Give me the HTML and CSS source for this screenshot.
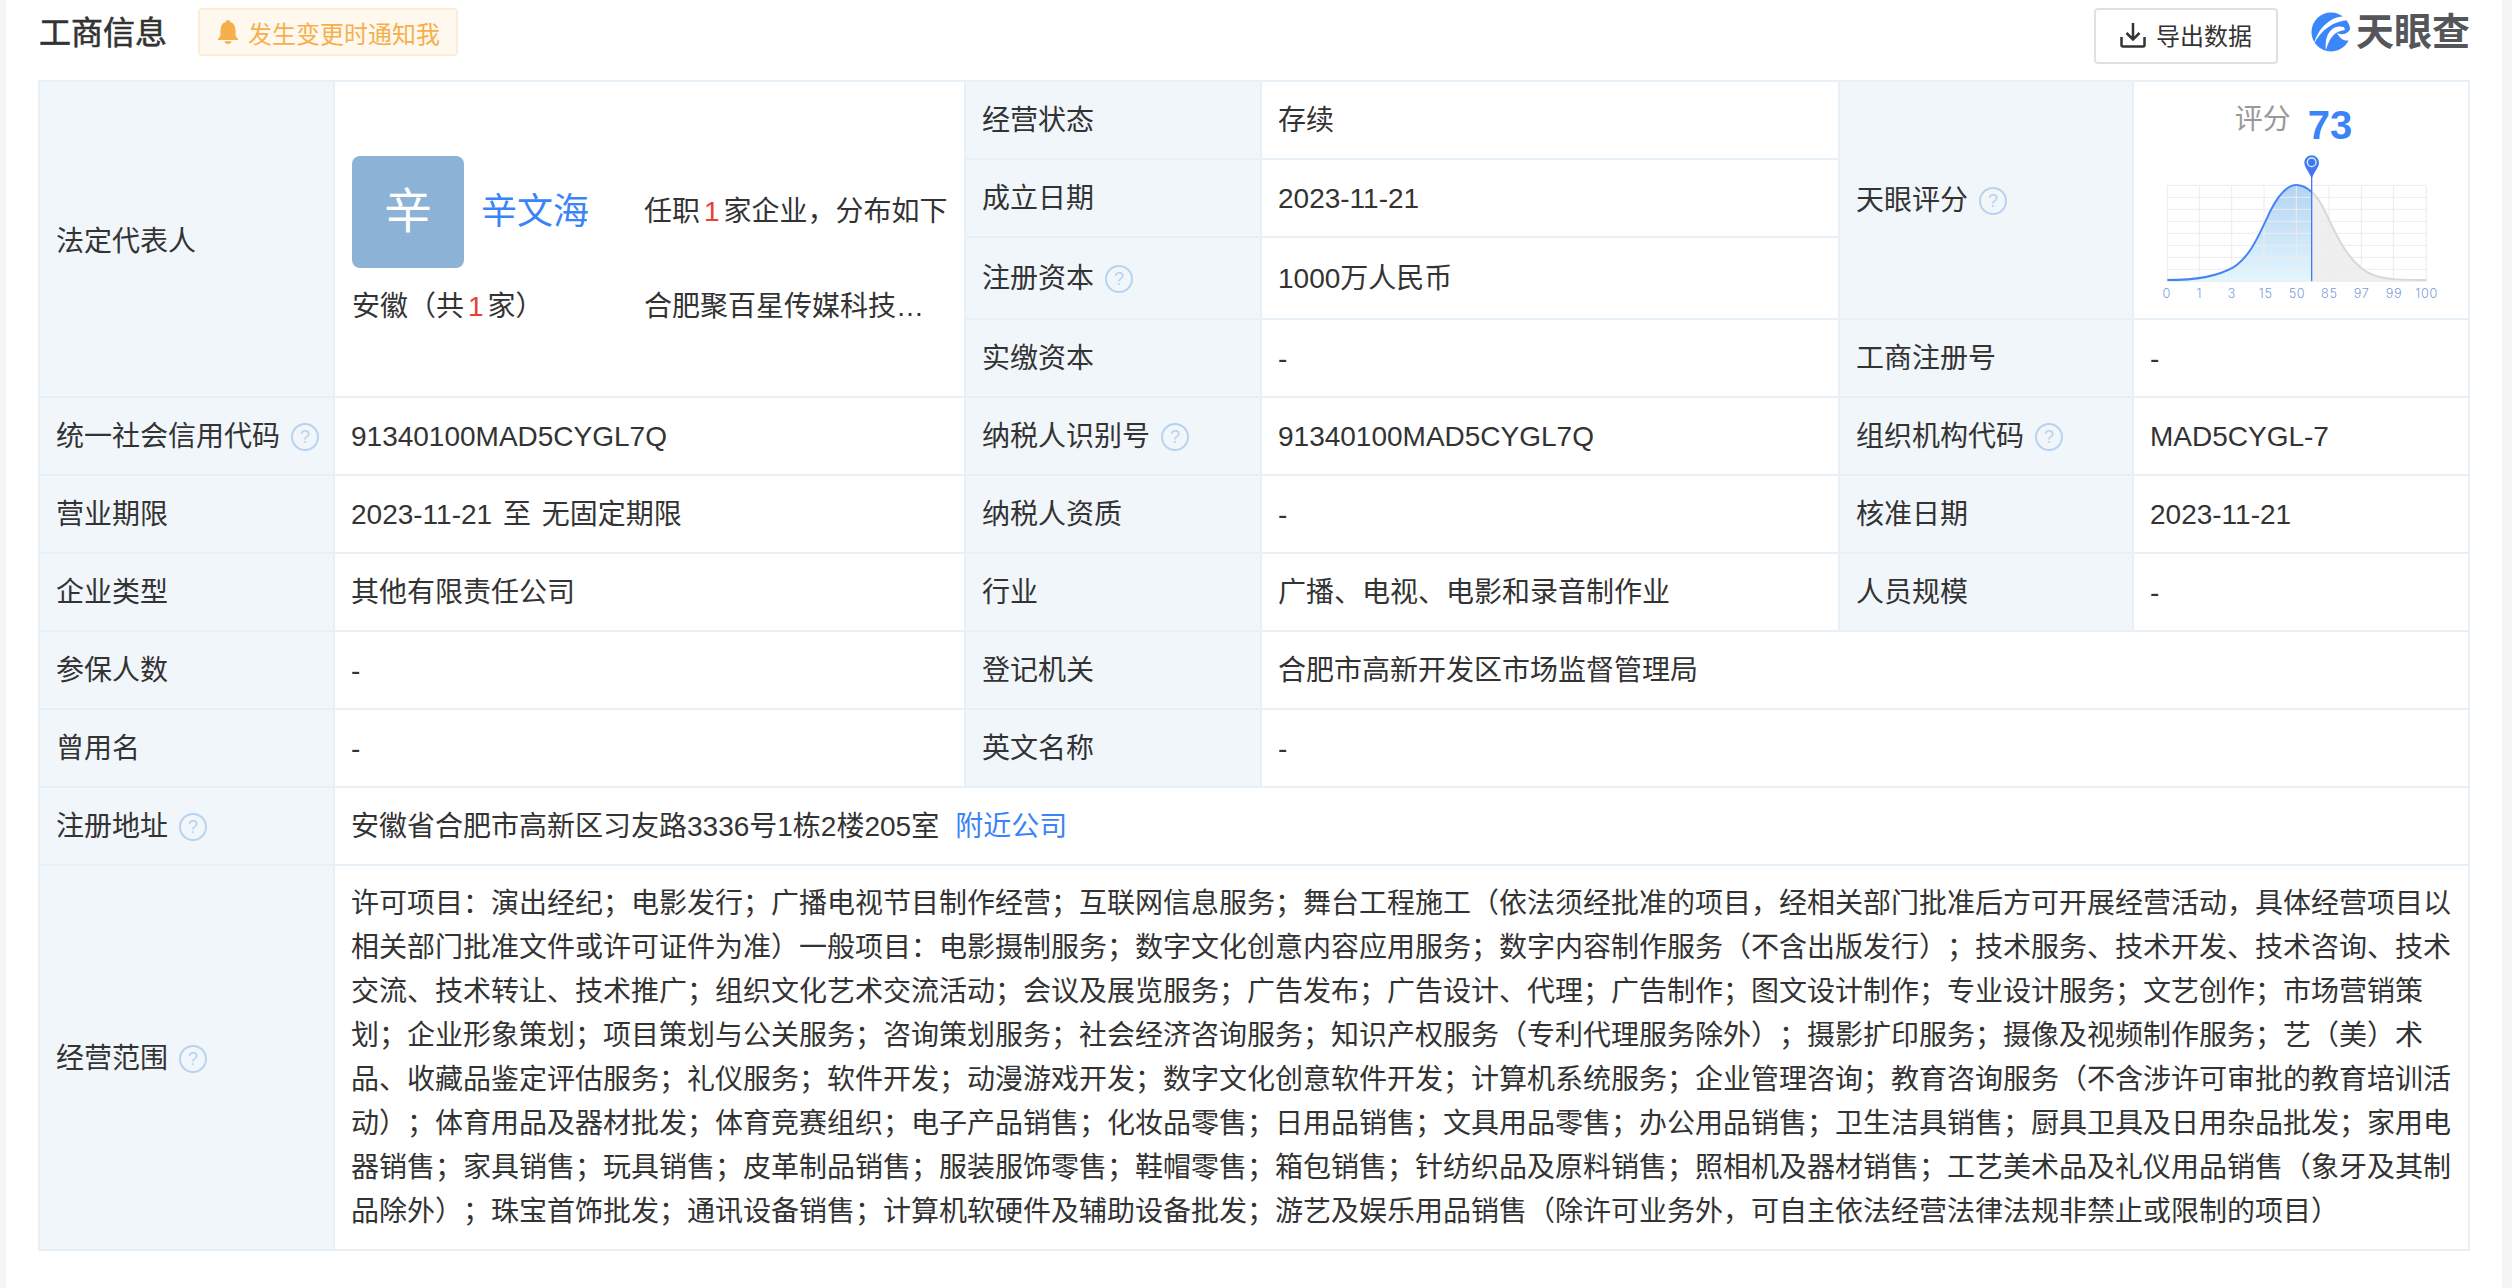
FILE: index.html
```html
<!DOCTYPE html>
<html lang="zh-CN">
<head>
<meta charset="utf-8">
<title>工商信息</title>
<link rel="stylesheet" href="styles.css">
</head>
<body>
<main class="card">
  <header class="head">
    <h2 class="title">工商信息</h2>
    <div class="notify">
      <svg class="bell" viewBox="0 0 20 24"><path d="M10 0c1.300 0 2.200.9 2.300 2C15.800 3 17.500 6 17.500 10v5.500L20 19v1H0v-1l2.500-3.500V10C2.500 6 4.200 3 7.700 2 7.800.9 8.700 0 10 0z"/><path d="M6.500 21.300h7C13.200 23 11.800 24 10 24s-3.200-1-3.500-2.700z"/></svg>
      <span>发生变更时通知我</span>
    </div>
    <div class="spacer"></div>
    <button class="export" type="button">
      <svg class="dl" viewBox="0 0 26 26"><path d="M13 1v16M6.500 11l6.500 6.500 6.500-6.500M1.500 15v8c0 1 .6 1.500 1.500 1.500h20c.9 0 1.500-.5 1.500-1.500v-8"/></svg>
      <span>导出数据</span>
    </button>
    <div class="logo">
      <svg class="logo-mark" viewBox="0 0 40 40">
        <circle cx="20" cy="20" r="19.500" fill="#3b86f8"/>
        <path d="M37 5C25 2 8 12 3 32 10 18 22 9 38 8Z" fill="#fff"/>
        <path d="M33 15C23 12 13 20 15 38 18 27 23 19 34 18Z" fill="#fff"/>
        <path d="M40 15C38 21 33 24 26 21 29 27 34 30 39 28L40 24Z" fill="#fff"/>
      </svg>
      <span class="logo-text">天眼查</span>
    </div>
  </header>

  <table class="info">
    <colgroup>
      <col class="c1"><col class="c2"><col class="c3"><col class="c4"><col class="c5"><col class="c6">
    </colgroup>
    <tbody>
      <tr>
        <th rowspan="4" class="legal-label">法定代表人</th>
        <td rowspan="4" class="legal">
          <div class="legal-grid">
            <div class="person">
              <div class="avatar">辛</div>
              <a class="name">辛文海</a>
            </div>
            <div class="dist">任职<i class="red">1</i>家企业，分布如下</div>
            <div>安徽（共<i class="red">1</i>家）</div>
            <div class="dist clip">合肥聚百星传媒科技…</div>
          </div>
        </td>
        <th>经营状态</th>
        <td>存续</td>
        <th rowspan="3">天眼评分<span class="help">?</span></th>
        <td rowspan="3" class="score">
          <div class="score-head"><span class="score-label">评分</span><span class="score-num">73</span></div>
          <svg class="chart" viewBox="12 210 1002 480">
            <defs>
              <linearGradient id="bluefill" x1="0" y1="0" x2="0" y2="1">
                <stop offset="0" stop-color="#b4d3f4"/>
                <stop offset="1" stop-color="#e3f6fd"/>
              </linearGradient>
              <linearGradient id="pinfill" x1="0" y1="0" x2="0" y2="1">
                <stop offset="0" stop-color="#3b82ee"/>
                <stop offset="1" stop-color="#4a6ff0"/>
              </linearGradient>
            </defs>
            <path class="gray-fill" d="M545 336C575 360 590 410 620 465C650 525 690 570 730 585C770 600 820 600 889 600V604H545Z"/>
            <path fill="url(#bluefill)" d="M112 600C200 600 260 590 310 562C360 530 385 470 420 395C445 345 470 315 499 315C515 315 530 322 545 336V604H112Z"/>
            <path class="grid" d="M112 316V604M208 316V604M305 316V604M402 316V604M499 316V604M597 316V604M694 316V604M790 316V604M889 316V604M112 316H889M112 352H889M112 388H889M112 424H889M112 460H889M112 496H889M112 532H889M112 568H889M112 604H889"/>
            <path class="gray-line" d="M545 336C575 360 590 410 620 465C650 525 690 570 730 585C770 600 820 600 889 600"/>
            <path class="blue-line" d="M112 600C200 600 260 590 310 562C360 530 385 470 420 395C445 345 470 315 499 315C515 315 530 322 545 336"/>
            <path class="pin-line" d="M545 280V604"/>
            <path fill="url(#pinfill)" d="M545 226c12 0 22 10 22 22 0 14-14 26-22 48-8-22-22-34-22-48 0-12 10-22 22-22z"/>
            <circle class="pin-dot" cx="545" cy="247" r="13"/>
            <g class="ticks">
              <text x="110" y="655">0</text><text x="208" y="655">1</text><text x="305" y="655">3</text><text x="407" y="655">15</text><text x="501" y="655">50</text><text x="598" y="655">85</text><text x="695" y="655">97</text><text x="792" y="655">99</text><text x="890" y="655">100</text>
            </g>
          </svg>
        </td>
      </tr>
      <tr><th>成立日期</th><td>2023-11-21</td></tr>
      <tr class="r-wide"><th>注册资本<span class="help">?</span></th><td>1000万人民币</td></tr>
      <tr><th>实缴资本</th><td>-</td><th>工商注册号</th><td>-</td></tr>
      <tr><th>统一社会信用代码<span class="help">?</span></th><td>91340100MAD5CYGL7Q</td><th>纳税人识别号<span class="help">?</span></th><td>91340100MAD5CYGL7Q</td><th>组织机构代码<span class="help">?</span></th><td>MAD5CYGL-7</td></tr>
      <tr><th>营业期限</th><td>2023-11-21 <span class="to">至</span> 无固定期限</td><th>纳税人资质</th><td>-</td><th>核准日期</th><td>2023-11-21</td></tr>
      <tr><th>企业类型</th><td>其他有限责任公司</td><th>行业</th><td>广播、电视、电影和录音制作业</td><th>人员规模</th><td>-</td></tr>
      <tr><th>参保人数</th><td>-</td><th>登记机关</th><td colspan="3">合肥市高新开发区市场监督管理局</td></tr>
      <tr><th>曾用名</th><td>-</td><th>英文名称</th><td colspan="3">-</td></tr>
      <tr><th>注册地址<span class="help">?</span></th><td colspan="5">安徽省合肥市高新区习友路3336号1栋2楼205室<a class="near">附近公司</a></td></tr>
      <tr class="r-scope"><th>经营范围<span class="help">?</span></th><td colspan="5" class="scope">许可项目：演出经纪；电影发行；广播电视节目制作经营；互联网信息服务；舞台工程施工（依法须经批准的项目，经相关部门批准后方可开展经营活动，具体经营项目以相关部门批准文件或许可证件为准）一般项目：电影摄制服务；数字文化创意内容应用服务；数字内容制作服务（不含出版发行）；技术服务、技术开发、技术咨询、技术交流、技术转让、技术推广；组织文化艺术交流活动；会议及展览服务；广告发布；广告设计、代理；广告制作；图文设计制作；专业设计服务；文艺创作；市场营销策划；企业形象策划；项目策划与公关服务；咨询策划服务；社会经济咨询服务；知识产权服务（专利代理服务除外）；摄影扩印服务；摄像及视频制作服务；艺（美）术品、收藏品鉴定评估服务；礼仪服务；软件开发；动漫游戏开发；数字文化创意软件开发；计算机系统服务；企业管理咨询；教育咨询服务（不含涉许可审批的教育培训活动）；体育用品及器材批发；体育竞赛组织；电子产品销售；化妆品零售；日用品销售；文具用品零售；办公用品销售；卫生洁具销售；厨具卫具及日用杂品批发；家用电器销售；家具销售；玩具销售；皮革制品销售；服装服饰零售；鞋帽零售；箱包销售；针纺织品及原料销售；照相机及器材销售；工艺美术品及礼仪用品销售（象牙及其制品除外）；珠宝首饰批发；通讯设备销售；计算机软硬件及辅助设备批发；游艺及娱乐用品销售（除许可业务外，可自主依法经营法律法规非禁止或限制的项目）</td></tr>
    </tbody>
  </table>
</main>
</body>
</html>
```

FILE: styles.css
```css
* { box-sizing: border-box; }
html, body { margin: 0; height: 100%; }
body {
  background: #f5f5f5;
  padding: 0 10px 0 6px;
  overflow: hidden;
  font-family: "Liberation Sans", "Noto Sans CJK SC", sans-serif;
  color: #333;
  font-size: 28px;
  text-spacing-trim: space-all;
}
.card {
  background: #fff;
  height: 1288px;
  padding: 0 32px;
}
.head {
  display: flex;
  align-items: flex-start;
  height: 80px;
  padding-top: 8px;
}
.title {
  margin: 1px 31px 0 1px;
  font-size: 32px;
  font-weight: 400;
  -webkit-text-stroke: 0.6px #333;
  line-height: 48px;
  color: #333;
}
.notify {
  display: flex;
  align-items: center;
  gap: 10px;
  height: 48px;
  padding: 0 16px 0 18px;
  background: #fff8ef;
  border: 2px solid #ffecd4;
  border-radius: 4px;
  color: #f5b04c;
  font-size: 24px;
}
.bell { width: 20px; height: 24px; fill: #f5b04c; }
.spacer { flex: 1; }
.export {
  display: flex;
  align-items: center;
  justify-content: center;
  gap: 10px;
  width: 184px;
  height: 56px;
  background: #fff;
  border: 2px solid #e0e0e0;
  border-radius: 4px;
  color: #333;
  font: inherit;
  font-size: 24px;
  padding: 0 0 3px;
}
.dl { width: 26px; height: 26px; fill: none; stroke: #333; stroke-width: 2.500; }
.logo {
  display: flex;
  align-items: center;
  gap: 5px;
  margin: 4px 0 0 33px;
  height: 40px;
}
.logo-mark { width: 40px; height: 40px; }
.logo-text {
  font-size: 38px;
  font-weight: 700;
  line-height: 40px;
  color: #54565a;
}
.info {
  width: 2432px;
  table-layout: fixed;
  border-collapse: collapse;
  border: 2px solid #e7eff7;
}
.c1 { width: 295px; }
.c2 { width: 631px; }
.c3 { width: 296px; }
.c4 { width: 578px; }
.c5 { width: 294px; }
.c6 { width: 336px; }
.info tr { height: 78px; }
.info tr.r-wide { height: 82px; }
.info tr.r-scope { height: 385px; }
.info th, .info td {
  border: 2px solid #e7eff7;
  padding: 2px 16px 0;
  font-size: 28px;
  font-weight: 400;
  line-height: 44px;
  text-align: left;
  vertical-align: middle;
  color: #333;
}
.info th { background: #f1f6fb; white-space: nowrap; }
.info th.legal-label { padding-top: 5px; }
.info td.scope { padding-top: 0; }
.help {
  display: inline-block;
  width: 28px;
  height: 28px;
  margin-left: 11px;
  border: 2px solid #b8d3ee;
  border-radius: 50%;
  color: #b8d3ee;
  font-size: 18px;
  line-height: 24px;
  text-align: center;
  vertical-align: 3px;
}
.info td.legal { padding: 7px 12px 0 17px; }
.legal-grid {
  display: grid;
  grid-template-columns: 292px 1fr;
  align-items: center;
  row-gap: 17px;
}
.person { display: flex; align-items: center; gap: 17px; }
.avatar {
  display: flex;
  align-items: center;
  justify-content: center;
  width: 112px;
  height: 112px;
  border-radius: 8px;
  background: #8cb2d6;
  color: #fff;
  font-size: 48px;
}
.name { color: #3a84f8; font-size: 36px; }
.red { color: #e8412f; font-style: normal; margin: 0 4px; }
.clip { white-space: nowrap; overflow: hidden; }
.to { margin: 0 3px; }
.near { color: #3a84f8; margin-left: 16px; }
.info td.score { padding: 0; vertical-align: top; }
.score-head {
  display: flex;
  justify-content: center;
  align-items: flex-start;
  gap: 17px;
  height: 68px;
  padding-right: 15px;
}
.score-label { color: #999; font-size: 28px; margin-top: 16px; }
.score-num { color: #3a84f8; font-size: 40px; font-weight: 700; margin-top: 21px; }
.chart { display: block; width: 334px; height: 160px; }
.grid { fill: none; stroke: #ececee; stroke-width: 3; }
.gray-fill { fill: #efefef; }
.gray-line { fill: none; stroke: #d8d8d8; stroke-width: 6; }
.blue-line { fill: none; stroke: #4485f2; stroke-width: 6; }
.pin-line { stroke: #4a78ee; stroke-width: 4; }
.pin-dot { fill: #3b7aee; stroke: #dfe9fb; stroke-width: 4; }
.ticks text {
  font-family: Inter, sans-serif;
  font-size: 38px;
  font-weight: 300;
  letter-spacing: 2px;
  fill: #7d9cd8;
  text-anchor: middle;
}
```
